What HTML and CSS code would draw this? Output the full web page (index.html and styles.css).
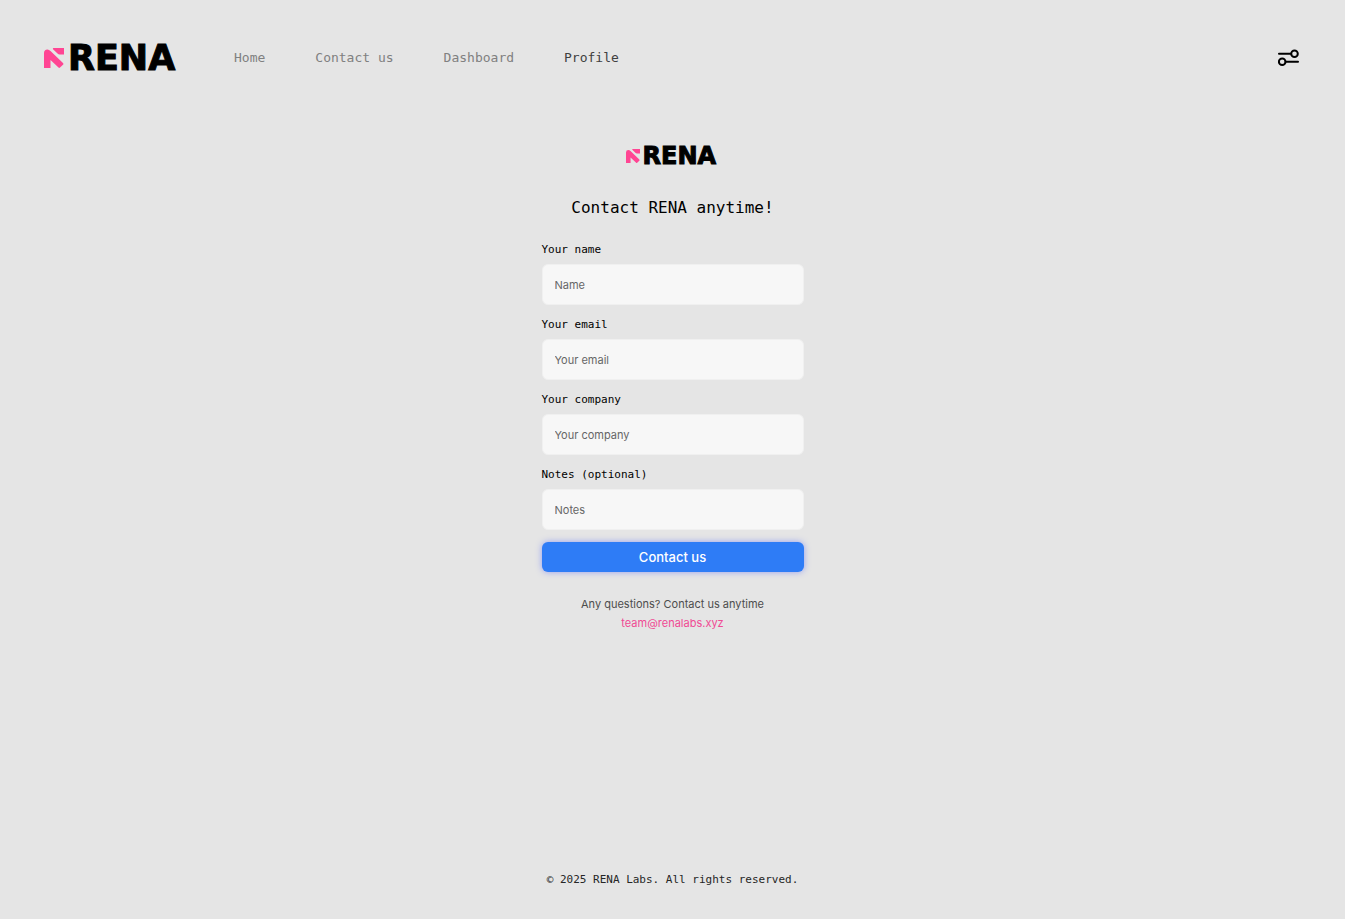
FILE: index.html
```
<!DOCTYPE html>
<html lang="en">
<head>
    <meta charset="UTF-8">
    <meta name="viewport" content="width=device-width, initial-scale=1.0">
    <title>Contact RENA</title>
    <link rel="stylesheet" href="styles.css">
</head>
<body>
    <header class="header">
        <a href="#" class="logo">
            <svg class="logo-mark" viewBox="0 0 20 20" aria-hidden="true">
                <path d="M0 20V5Q0 1.500 3.500 1.500Q5 1.500 6.500 3L19 15Q19.800 16 19 16.800L16 19.600Q15.200 20.200 14.500 19.500L6.500 12V20Z"/>
                <path d="M9.500 0H20V6.500H15.500Q14.500 6.500 13.800 5.800L9 1.200Q8.500 0 9.500 0Z"/>
            </svg>
            <span class="logo-text">RENA</span>
        </a>
        <nav class="nav">
            <a href="#">Home</a>
            <a href="#">Contact us</a>
            <a href="#">Dashboard</a>
            <a href="#" class="active">Profile</a>
        </nav>
        <button type="button" class="settings" aria-label="Settings">
            <svg viewBox="0 0 22 18" aria-hidden="true">
                <circle cx="16.500" cy="4.700" r="3.300"/>
                <path d="M1 4.700H13"/>
                <circle cx="4.200" cy="12.800" r="3.300"/>
                <path d="M7.700 12.800H20"/>
            </svg>
        </button>
    </header>

    <main class="main">
        <div class="logo logo-small">
            <svg class="logo-mark" viewBox="0 0 20 20" aria-hidden="true">
                <path d="M0 20V5Q0 1.500 3.500 1.500Q5 1.500 6.500 3L19 15Q19.800 16 19 16.800L16 19.600Q15.200 20.200 14.500 19.500L6.500 12V20Z"/>
                <path d="M9.500 0H20V6.500H15.500Q14.500 6.500 13.800 5.800L9 1.200Q8.500 0 9.500 0Z"/>
            </svg>
            <span class="logo-text">RENA</span>
        </div>
        <h1>Contact RENA anytime!</h1>
        <form class="form">
            <div class="field">
                <label for="name">Your name</label>
                <input type="text" id="name" placeholder="Name">
            </div>
            <div class="field">
                <label for="email">Your email</label>
                <input type="email" id="email" placeholder="Your email">
            </div>
            <div class="field">
                <label for="company">Your company</label>
                <input type="text" id="company" placeholder="Your company">
            </div>
            <div class="field">
                <label for="notes">Notes (optional)</label>
                <input type="text" id="notes" placeholder="Notes">
            </div>
            <button type="submit" class="submit">Contact us</button>
        </form>
        <div class="questions">
            <p>Any questions? Contact us anytime</p>
            <a href="mailto:team@renalabs.xyz">team@renalabs.xyz</a>
        </div>
    </main>

    <footer class="footer">© 2025 RENA Labs. All rights reserved.</footer>
</body>
</html>
```
FILE: styles.css
```
* {
    box-sizing: border-box;
}

body {
    margin: 0;
    min-height: 100vh;
    display: flex;
    flex-direction: column;
    background-color: #e5e5e5;
    color: #000;
    font-family: "DejaVu Sans Mono", "Liberation Mono", monospace;
}

a {
    text-decoration: none;
}

.header {
    display: flex;
    align-items: center;
    gap: 50px;
    padding: 38px 44px 0;
}

.logo {
    display: flex;
    align-items: center;
    gap: 4px;
    width: 140px;
    height: 40px;
    color: #000;
}

.logo-mark {
    width: 20px;
    height: 20px;
    fill: #ff4593;
    flex-shrink: 0;
}

.logo-text {
    font-family: "DejaVu Sans", sans-serif;
    font-size: 35px;
    font-weight: bold;
    line-height: 40px;
    -webkit-text-stroke: 1px #000;
}

.logo-small {
    width: 94px;
    height: 24px;
    gap: 3px;
}

.logo-small .logo-mark {
    width: 14px;
    height: 14px;
}

.logo-small .logo-text {
    font-size: 24px;
    line-height: 24px;
}

.nav {
    display: flex;
    gap: 50px;
    font-size: 13px;
    line-height: 20px;
}

.nav a {
    color: #808080;
}

.nav .active {
    color: #404040;
}

.settings {
    width: 24px;
    height: 20px;
    margin-left: auto;
    padding: 0 1px;
    border: none;
    background: none;
    cursor: pointer;
}

.settings svg {
    display: block;
    width: 22px;
    height: 18px;
    fill: none;
    stroke: #000;
    stroke-width: 2;
    stroke-linecap: round;
}

.main {
    flex: 1;
    display: flex;
    flex-direction: column;
    align-items: center;
    padding-top: 66px;
}

h1 {
    margin: 28px 0 22px;
    font-size: 16px;
    font-weight: normal;
    line-height: 24px;
}

.form {
    width: 262px;
    max-width: 90%;
    display: flex;
    flex-direction: column;
    gap: 12px;
}

.field {
    display: flex;
    flex-direction: column;
    gap: 6px;
}

label {
    font-size: 11px;
    line-height: 16px;
}

input {
    width: 100%;
    height: 41px;
    padding: 0 12px;
    border: 1px solid #f0f0f0;
    border-radius: 6px;
    background-color: #f7f7f7;
    font-family: Inter, sans-serif;
    font-size: 11px;
}

input::placeholder {
    color: #666;
}

.submit {
    height: 30px;
    border: none;
    border-radius: 6px;
    background-color: #2e7cf6;
    box-shadow: 0 0 6px rgba(70, 90, 255, 0.5);
    color: #fff;
    font-family: Inter, sans-serif;
    font-size: 13px;
    font-weight: 500;
    cursor: pointer;
}

.questions {
    margin-top: 23px;
    text-align: center;
    font-family: Inter, sans-serif;
    font-size: 11px;
    line-height: 19px;
    color: #4d4d4d;
}

.questions p {
    margin: 0;
}

.questions a {
    display: block;
    color: #f04a94;
}

.footer {
    padding: 24px 0 31px;
    text-align: center;
    font-size: 11px;
    line-height: 16px;
    color: #262626;
}
```
